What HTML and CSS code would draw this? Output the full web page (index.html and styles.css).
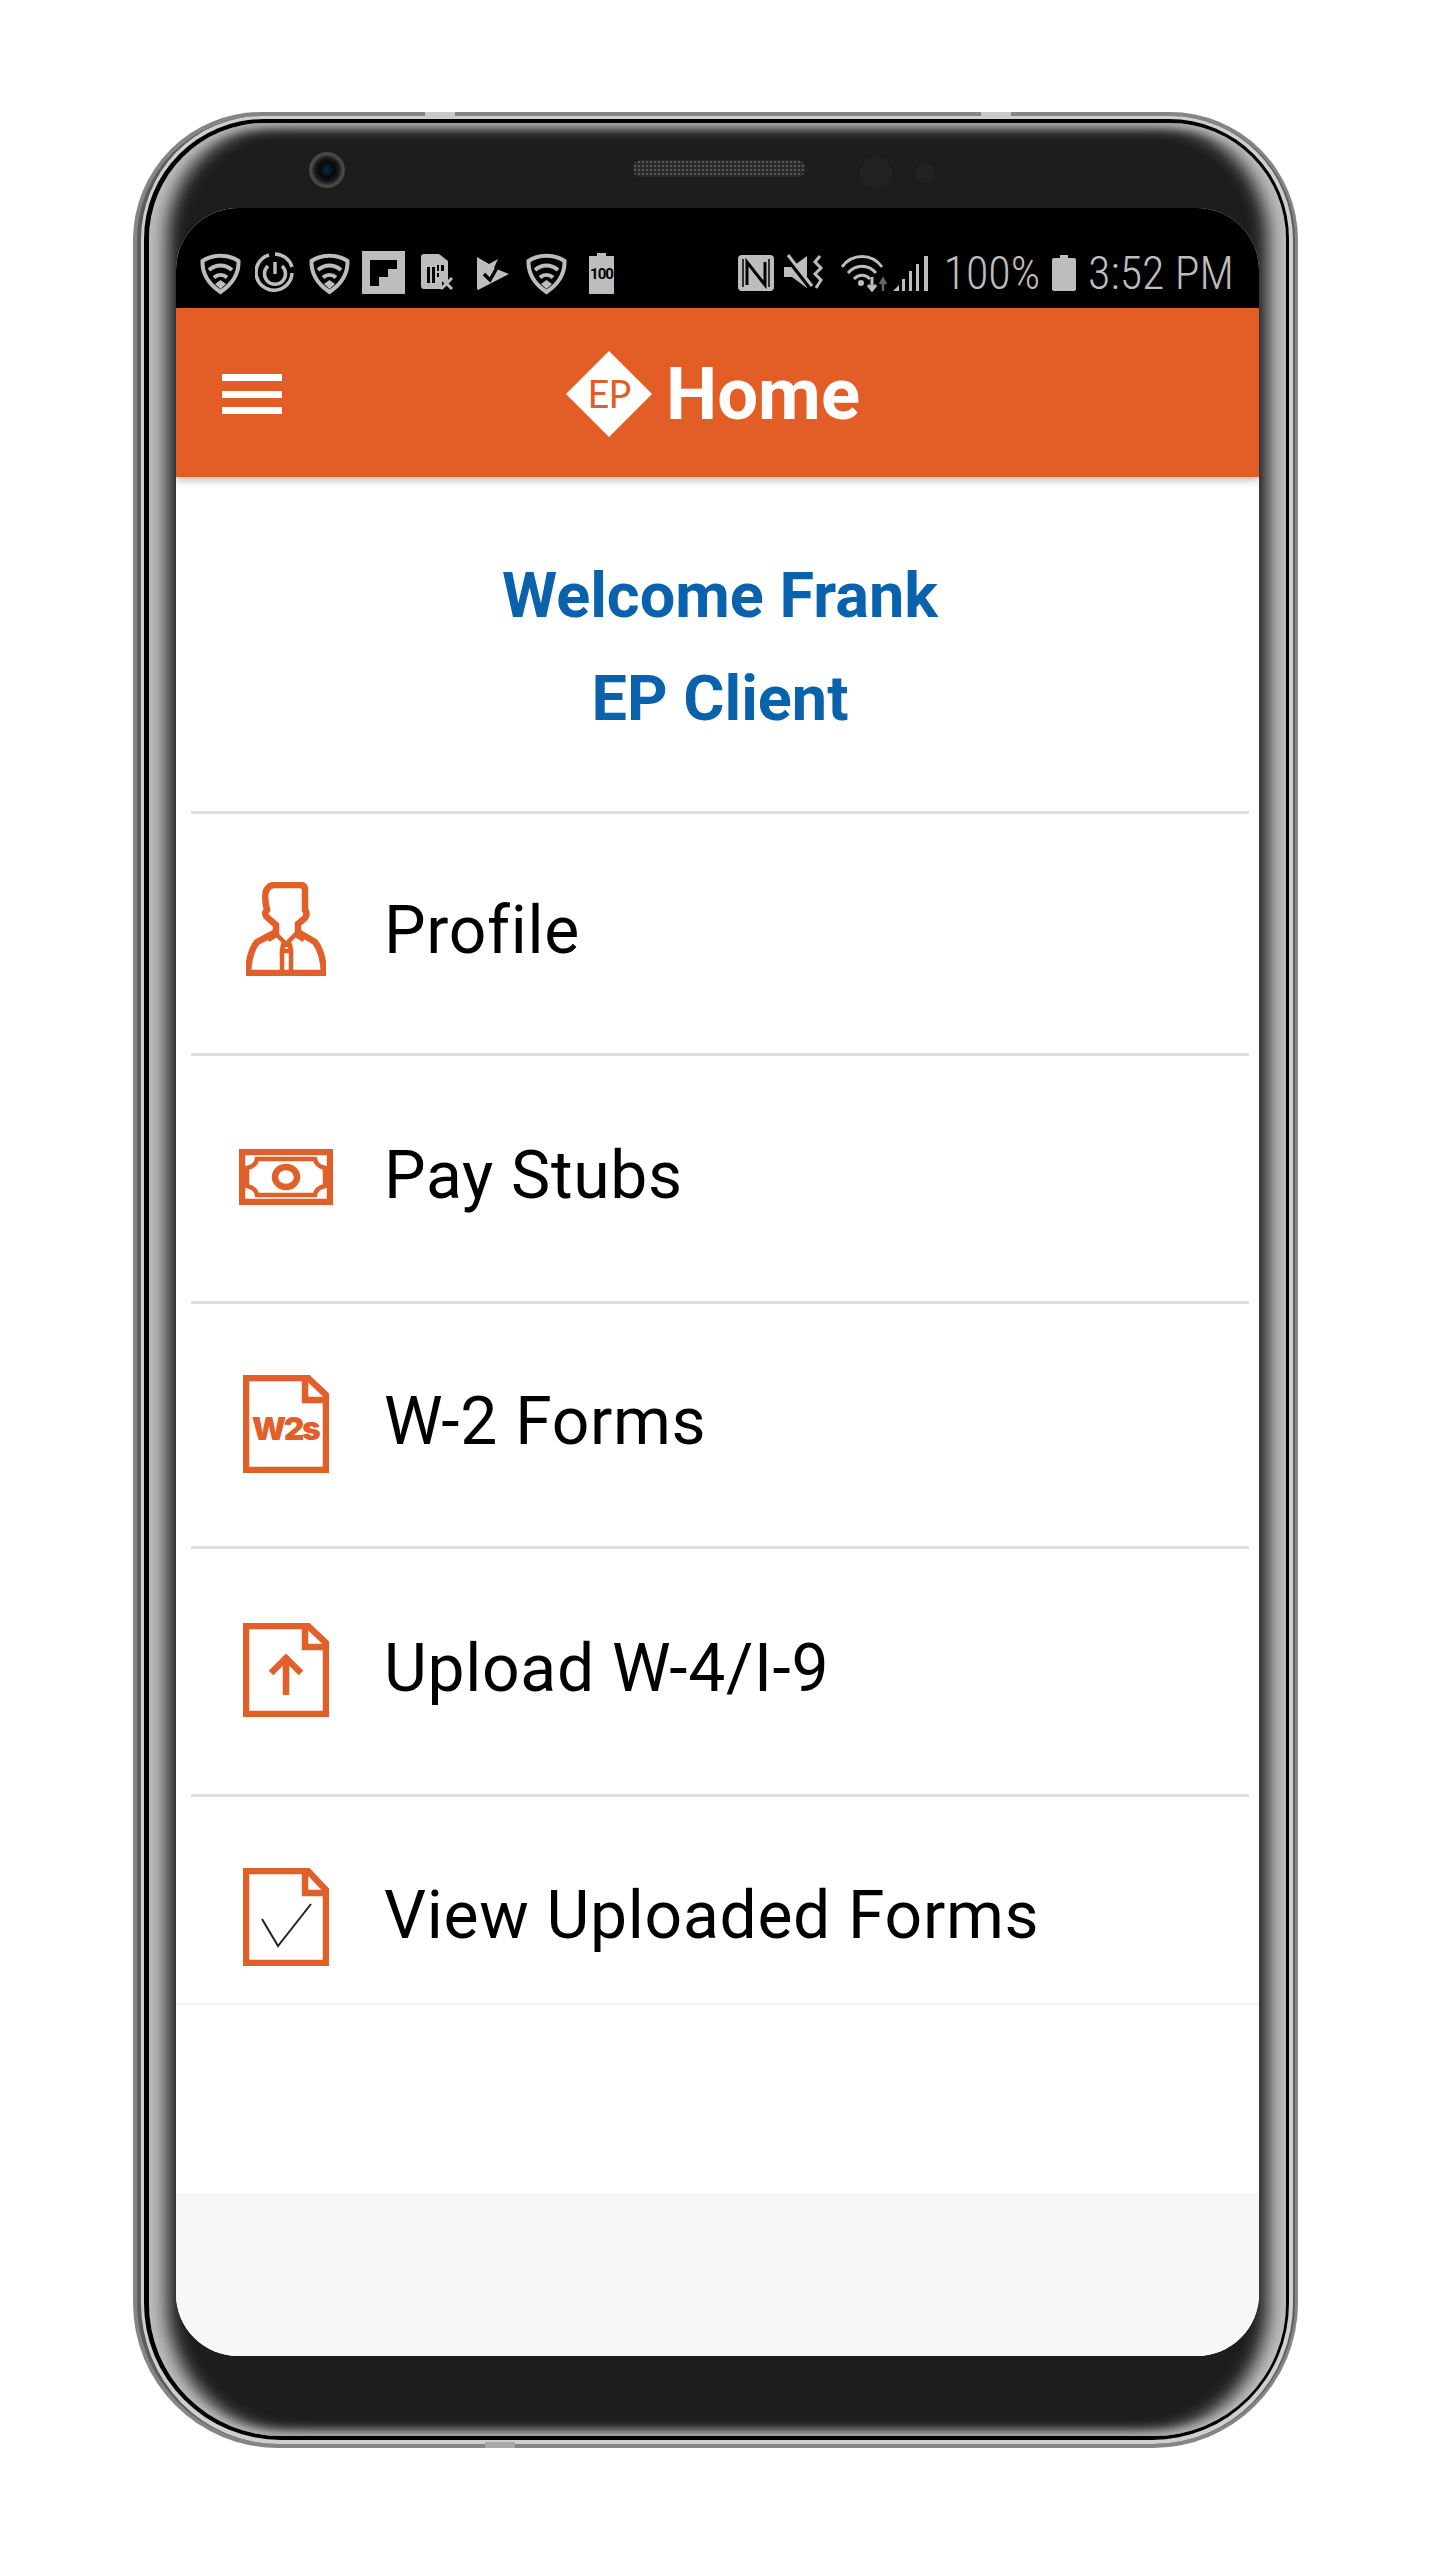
FILE: index.html
```html
<!DOCTYPE html>
<html lang="en">
<head>
    <meta charset="UTF-8">
    <meta name="viewport" content="width=device-width, initial-scale=1.0">
    <title>Home</title>
    <link rel="stylesheet" href="styles.css">
</head>
<body>
    <div class="phone">
        <span class="notch notch-top-a"></span>
        <span class="notch notch-top-b"></span>
        <span class="notch notch-bottom"></span>
        <div class="rim">
            <div class="trim">
                <div class="glass">
                    <div class="bezel">
                        <span class="camera"></span>
                        <span class="speaker"></span>
                        <span class="sensor sensor-big"></span>
                        <span class="sensor sensor-small"></span>
                    </div>

                    <div class="screen">
                        <div class="statusbar">
                            <div class="status-left">
                                <svg class="st" width="55" height="44" viewBox="0 0 55 44"><use href="#shield"/></svg>
                                <svg class="st" width="54" height="44" viewBox="0 0 54 44">
                                    <path d="M20 3a18 18 0 0 1 17 13M37 22A18 18 0 1 1 14 4" class="st-line"/>
                                    <path d="M13 15a10.5 10.5 0 1 0 14 0" class="st-line"/>
                                    <path d="M20 11v12" class="st-line"/>
                                </svg>
                                <svg class="st" width="53" height="44" viewBox="0 0 53 44"><use href="#shield"/></svg>
                                <svg class="st" width="59" height="44" viewBox="0 0 59 44">
                                    <rect x="0" y="0" width="43" height="43" fill="#bdbdbd"/>
                                    <path d="M8 9H35V18H26V26H17V35H8Z" fill="#000"/>
                                </svg>
                                <svg class="st" width="56" height="44" viewBox="0 0 56 44">
                                    <path d="M3 3H18L27 10V30H21V38H3Q0 38 0 35V6Q0 3 3 3Z" fill="#bdbdbd"/>
                                    <path d="M6 16h3v16h-3zM11 16h3v16h-3zM16 14h2v6h-2zM16 22h2v4h-2zM20 14h3v6h-3z" fill="#000"/>
                                    <path d="M20 27l11 11M31 27L20 38" class="st-line st-thin"/>
                                </svg>
                                <svg class="st" width="49" height="44" viewBox="0 0 49 44">
                                    <path d="M0 6L12 13L21 8L17 17L32 23L1 39Q0 39 0 37Z" fill="#bdbdbd"/>
                                    <path d="M7 23L13 29L25 8" class="st-check"/>
                                </svg>
                                <svg class="st" width="63" height="44" viewBox="0 0 63 44"><use href="#shield"/></svg>
                                <svg class="st" width="25" height="44" viewBox="0 0 25 44">
                                    <path d="M8 2h9v3h8v38H0V5h8z" fill="#bdbdbd"/>
                                    <text x="12.5" y="28" class="st-hundred">100</text>
                                </svg>
                            </div>
                            <div class="status-right">
                                <svg class="st" width="36" height="38" viewBox="0 0 36 38">
                                    <rect x="0" y="1" width="36" height="36" rx="4" fill="#bdbdbd"/>
                                    <path d="M9 31V8L27 31V8" class="st-n"/>
                                    <path d="M5 5V33M31 5V33" stroke="#000" stroke-width="1.5" fill="none"/>
                                </svg>
                                <svg class="st st-mute" width="40" height="38" viewBox="0 0 40 38">
                                    <path d="M0 13H8L23 2V34L8 23H0Z" fill="#bdbdbd"/>
                                    <path d="M2 3L27 35" stroke="#000" stroke-width="4"/>
                                    <path d="M4 1L28 32" stroke="#bdbdbd" stroke-width="3"/>
                                    <path d="M36 2L31 8L37 14L31 20L37 26L32 34" class="st-line st-thin" />
                                </svg>
                                <svg class="st st-wifi" width="48" height="38" viewBox="0 0 48 38">
                                    <path d="M1 13C11 -1 31 -1 41 13M7 19C15 10 27 10 35 19M13 25C18 20 24 20 29 25" class="st-line st-thin"/>
                                    <circle cx="20" cy="29" r="3" fill="#bdbdbd"/>
                                    <path d="M31 23V35M27 31L31 36L35 31" class="st-line st-thin"/>
                                    <path d="M42 37V26M39 30L42 25L45 30" stroke="#666" stroke-width="2.5" fill="none"/>
                                </svg>
                                <svg class="st st-signal" width="36" height="38" viewBox="0 0 36 38">
                                    <path d="M0 37L6 31V37ZM9 37V25H12V37ZM16 37V17H19V37ZM23 37V10H26V37ZM31 37V2H35V37Z" fill="#bdbdbd"/>
                                </svg>
                                <span class="st-text st-pct">100%</span>
                                <svg class="st st-batt" width="24" height="38" viewBox="0 0 24 38">
                                    <path d="M8 1h8v3h6q2 0 2 2v29q0 2-2 2H2q-2 0-2-2V6q0-2 2-2h6z" fill="#bdbdbd"/>
                                </svg>
                                <span class="st-text st-time">3:52 PM</span>
                            </div>
                        </div>

                        <div class="appbar">
                            <div class="menu-btn">
                                <span></span>
                                <span></span>
                                <span></span>
                            </div>
                            <div class="brand">
                                <svg class="brand-mark" width="86" height="86" viewBox="0 0 86 86">
                                    <path d="M43 0L86 43L43 86L0 43Z" fill="#fff"/>
                                    <text x="43" y="57" class="brand-ep">EP</text>
                                </svg>
                                <span class="brand-title">Home</span>
                            </div>
                        </div>

                        <div class="welcome">
                            <div>Welcome Frank</div>
                            <div>EP Client</div>
                        </div>

                        <div class="menu">
                            <div class="menu-row row-profile">
                                <div class="row-icon">
                                    <svg width="80" height="94" viewBox="0 0 80 94">
                                        <path d="M27 3H54Q59 3 59 8V28Q62 32 59 36L52 42V50L69 60Q77 70 78 91H2Q3 70 11 60L30 50V43L22 36Q17 32 21 28Q18 16 20 9Q22 4 27 3Z" class="ic-line"/>
                                        <path d="M29 51L40 62L51 51M30 53L22 58M50 53L58 58" class="ic-line ic-thin"/>
                                        <path d="M36 69H45V91H36ZM37 63H44L45 69H36Z" class="ic-line ic-thin"/>
                                    </svg>
                                </div>
                                <div class="row-label">Profile</div>
                            </div>
                            <div class="menu-row row-stubs">
                                <div class="row-icon">
                                    <svg width="94" height="56" viewBox="0 0 94 56">
                                        <rect x="3" y="3" width="88" height="50" class="ic-line"/>
                                        <path d="M18 10H76Q77 17 86 19V37Q77 39 76 46H18Q17 39 8 37V19Q17 17 18 10Z" class="ic-line ic-thin"/>
                                        <ellipse cx="47" cy="28" rx="11" ry="10" class="ic-line"/>
                                    </svg>
                                </div>
                                <div class="row-label">Pay Stubs</div>
                            </div>
                            <div class="menu-row row-w2">
                                <div class="row-icon">
                                    <svg width="86" height="98" viewBox="0 0 86 98">
                                        <path d="M3 3H65L83 20V95H3Z" class="ic-line"/>
                                        <path d="M62 3V25H83" class="ic-line"/>
                                        <text x="42" y="65" class="ic-w2s">W2s</text>
                                    </svg>
                                </div>
                                <div class="row-label">W-2 Forms</div>
                            </div>
                            <div class="menu-row row-upload">
                                <div class="row-icon">
                                    <svg width="86" height="94" viewBox="0 0 86 94">
                                        <path d="M3 3H65L83 20V91H3Z" class="ic-line"/>
                                        <path d="M62 3V24H83" class="ic-line"/>
                                        <path d="M43 72V33M28 50L43 35L58 50" class="ic-line"/>
                                    </svg>
                                </div>
                                <div class="row-label">Upload W-4/I-9</div>
                            </div>
                            <div class="menu-row row-view">
                                <div class="row-icon">
                                    <svg width="86" height="98" viewBox="0 0 86 98">
                                        <path d="M3 3H65L83 22V95H3Z" class="ic-line"/>
                                        <path d="M62 3V25H83" class="ic-line"/>
                                        <path d="M19 51L35 78L68 36" class="ic-tick"/>
                                    </svg>
                                </div>
                                <div class="row-label">View Uploaded Forms</div>
                            </div>
                        </div>

                        <div class="blank"></div>
                        <div class="navspace"></div>
                    </div>
                </div>
            </div>
        </div>
    </div>

    <svg class="defs" width="0" height="0">
        <defs>
            <g id="shield">
                <path d="M2.5 10C13 3 28 3 38.5 10C39 24 31 34 20.5 41C10 34 2 24 2.5 10Z" fill="none" stroke="#bdbdbd" stroke-width="4"/>
                <path d="M9 19C16 13 25 13 32 19M14 26.500C18 23 23 23 27 26.500" fill="none" stroke="#bdbdbd" stroke-width="4"/>
                <path d="M20.500 29L26 33L20.500 38L15 33Z" fill="#bdbdbd"/>
            </g>
        </defs>
    </svg>
</body>
</html>
```

FILE: styles.css
```css
* {
    box-sizing: border-box;
}
body {
    margin: 0;
    background: #fff;
    font-family: Roboto, Arial, sans-serif;
}
.defs {
    display: block;
}

/* phone frame */
.phone {
    position: relative;
    width: 1165px;
    height: 2336px;
    margin: 112px 0 0 133px;
    padding: 4px 3px 4px 4px;
    background: #858585;
    border-radius: 128px 128px 145px 145px;
}
.rim {
    height: 100%;
    padding: 3px 4px 4px 3px;
    background: #cfcfcf;
    border: solid #5c5c5c;
    border-width: 0 2px 0 4px;
    border-radius: 124px 124px 141px 141px;
}
.trim {
    height: 100%;
    padding: 4px 3px 4px 5px;
    background: #000;
    border-radius: 120px 120px 137px 137px;
}
.glass {
    height: 100%;
    padding: 0 27px 80px;
    background: #1c1e1c;
    border-radius: 116px 116px 132px 132px;
    box-shadow:
        inset 20px 0 18px -2px #bdbdbd,
        inset -20px 0 18px -2px #bdbdbd,
        inset 0 9px 8px -5px #8a8a8a,
        inset 0 -9px 8px -5px #8a8a8a;
}
.notch {
    position: absolute;
    width: 30px;
    height: 6px;
    background: #c9c9c9;
}
.notch-top-a {
    top: 0;
    left: 292px;
}
.notch-top-b {
    top: 0;
    left: 848px;
}
.notch-bottom {
    bottom: 0;
    left: 352px;
    background: #a8a8a8;
}

.bezel {
    display: flex;
    align-items: center;
    height: 85px;
    padding-top: 9px;
}
.camera {
    width: 36px;
    height: 36px;
    margin-left: 133px;
    border-radius: 50%;
    background: radial-gradient(circle, #0e2a44 0, #07090c 30%, #1b1b1b 48%, #4a4a48 62%, #2c2c2c 100%);
}
.speaker {
    width: 172px;
    height: 17px;
    margin: -4px 0 0 288px;
    border-radius: 8px;
    background-color: #2b2b2b;
    background-image: radial-gradient(circle, #555 1px, transparent 1.3px);
    background-size: 4px 4px;
}
.sensor {
    border-radius: 50%;
    background: #212221;
}
.sensor-big {
    width: 32px;
    height: 32px;
    margin: 6px 0 0 55px;
}
.sensor-small {
    width: 20px;
    height: 20px;
    margin: 6px 0 0 23px;
}

/* screen */
.screen {
    display: flex;
    flex-direction: column;
    height: 2148px;
    overflow: hidden;
    background: #fff;
    border-radius: 62px;
}
.statusbar {
    display: flex;
    justify-content: space-between;
    flex-shrink: 0;
    height: 100px;
    padding: 43px 25px 0 24px;
    background: #000;
}
.status-left,
.status-right {
    display: flex;
    align-items: flex-start;
}
.st {
    display: block;
    flex-shrink: 0;
}
.st-line {
    fill: none;
    stroke: #bdbdbd;
    stroke-width: 3.500;
}
.st-thin {
    stroke-width: 3;
}
.st-check {
    fill: none;
    stroke: #000;
    stroke-width: 3.500;
}
.st-n {
    fill: none;
    stroke: #000;
    stroke-width: 3;
}
.st-hundred {
    font-family: "Roboto", sans-serif;
    font-size: 15px;
    font-weight: 700;
    letter-spacing: -1px;
    text-anchor: middle;
    fill: #000;
}
.status-right {
    padding-top: 3px;
}
.st-mute {
    margin-left: 10px;
}
.st-wifi {
    margin-left: 17px;
}
.st-signal {
    margin-left: 4px;
}
.st-text {
    color: #bdbdbd;
    font-size: 46px;
    font-weight: 300;
    line-height: 38px;
    font-stretch: 75%;
}
.st-pct {
    margin-left: 15px;
}
.st-batt {
    margin-left: 12px;
}
.st-time {
    margin-left: 12px;
}

.appbar {
    position: relative;
    display: flex;
    align-items: center;
    flex-shrink: 0;
    height: 169px;
    padding: 3px 0 0 46px;
    background: #e35d26;
    box-shadow: 0 3px 8px rgba(0, 0, 0, 0.28);
}
.menu-btn {
    display: flex;
    flex-direction: column;
    gap: 9.5px;
    width: 60px;
}
.menu-btn span {
    height: 7px;
    background: #fff;
}
.brand {
    display: flex;
    align-items: center;
    gap: 14px;
    margin-left: 284px;
}
.brand-mark {
    display: block;
}
.brand-ep {
    font-family: Lato, sans-serif;
    font-size: 38px;
    text-anchor: middle;
    letter-spacing: -1px;
    fill: #e35d26;
}
.brand-title {
    margin-top: 2px;
    color: #fff;
    font-size: 72.5px;
    font-weight: 700;
    line-height: 86px;
}

.welcome {
    flex-shrink: 0;
    height: 334px;
    padding-top: 67px;
    color: #0a62ad;
    font-size: 63px;
    font-weight: 700;
    line-height: 103px;
    text-align: center;
}
.welcome div {
    padding-left: 5px;
}

/* menu rows */
.menu-row {
    display: flex;
    align-items: center;
    margin: 0 10px 0 15px;
    padding-bottom: 3px;
    border-top: 3px solid #dedede;
}
.row-profile {
    height: 242px;
}
.row-profile svg {
    margin-bottom: 7px;
}
.row-stubs {
    height: 248px;
}
.row-w2 {
    height: 245px;
}
.row-upload {
    height: 248px;
}
.row-view {
    height: 209px;
    padding-top: 37px;
}
.row-icon {
    display: flex;
    justify-content: center;
    width: 190px;
    margin-right: 3px;
}
.row-icon svg {
    display: block;
}
.row-label {
    margin-bottom: 4px;
    color: #000;
    font-size: 66px;
    letter-spacing: 0.7px;
}
.ic-line {
    fill: none;
    stroke: #e15f29;
    stroke-width: 6.500;
}
.ic-thin {
    stroke-width: 4.500;
}
.ic-tick {
    fill: none;
    stroke: #222;
    stroke-width: 2;
}
.ic-w2s {
    font-family: Inter, Roboto, sans-serif;
    font-size: 32px;
    font-weight: 900;
    letter-spacing: -2.5px;
    text-anchor: middle;
    fill: #e15f29;
}

.blank {
    flex-shrink: 0;
    height: 190px;
    border-top: 2px solid #f4f4f4;
}
.navspace {
    flex: 1;
    background: #f7f7f8;
}
```
